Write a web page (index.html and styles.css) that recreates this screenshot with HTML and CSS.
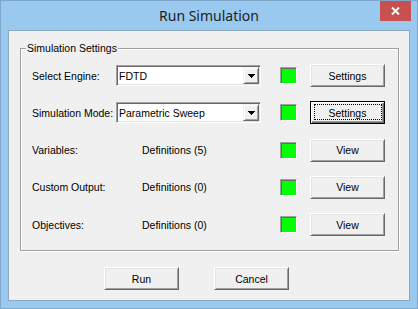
FILE: index.html
```html
<!DOCTYPE html>
<html lang="en">
<head>
    <meta charset="UTF-8">
    <title>Run Simulation</title>
    <link rel="stylesheet" href="styles.css">
</head>
<body>
    <div class="window">
        <div class="titlebar">
            <span class="title">Run Simulation</span>
            <button class="close">
                <svg width="9" height="8" viewBox="0 0 9 8"><path d="M1 0.5L8 7.5M8 0.5L1 7.5" stroke="#fff" stroke-width="2"/></svg>
            </button>
        </div>
        <div class="client">
            <div class="group">
                <span class="legend">Simulation Settings</span>
                <div class="grid">
                    <span class="label">Select Engine:</span>
                    <div class="combo">
                        <span class="combo-text">FDTD</span>
                        <span class="drop"><svg width="7" height="4" viewBox="0 0 7 4"><path d="M0 0h7v1h-1v1h-1v1h-1v1h-1v-1h-1v-1h-1v-1h-1z" fill="#000"/></svg></span>
                    </div>
                    <span class="status"></span>
                    <button class="btn">Settings</button>

                    <span class="label">Simulation Mode:</span>
                    <div class="combo">
                        <span class="combo-text">Parametric Sweep</span>
                        <span class="drop"><svg width="7" height="4" viewBox="0 0 7 4"><path d="M0 0h7v1h-1v1h-1v1h-1v1h-1v-1h-1v-1h-1v-1h-1z" fill="#000"/></svg></span>
                    </div>
                    <span class="status"></span>
                    <button class="btn focused">Settings</button>

                    <span class="label">Variables:</span>
                    <span class="value">Definitions (5)</span>
                    <span class="status"></span>
                    <button class="btn">View</button>

                    <span class="label">Custom Output:</span>
                    <span class="value">Definitions (0)</span>
                    <span class="status"></span>
                    <button class="btn">View</button>

                    <span class="label">Objectives:</span>
                    <span class="value">Definitions (0)</span>
                    <span class="status"></span>
                    <button class="btn">View</button>
                </div>
            </div>
            <div class="actions">
                <button class="btn">Run</button>
                <button class="btn">Cancel</button>
            </div>
        </div>
    </div>
</body>
</html>
```

FILE: styles.css
```css
body {
    margin: 0;
    font-family: 'Liberation Sans', Arial, sans-serif;
    font-size: 10.5px;
    color: #000;
}

.window {
    width: 418px;
    height: 309px;
    box-sizing: border-box;
    border: 1px solid #7fa7cc;
    background: #99c9ef;
    padding: 0 7px 7px 7px;
    position: relative;
}

.titlebar {
    height: 29px;
    display: flex;
    align-items: center;
    justify-content: center;
}

.title {
    font-family: 'Noto Sans', sans-serif;
    font-size: 14px;
    color: #222;
    margin-top: -1px;
}

.close {
    position: absolute;
    top: 0;
    right: 6px;
    width: 31px;
    height: 20px;
    border: none;
    padding: 0;
    background: #c75050;
    display: flex;
    align-items: center;
    justify-content: center;
}

.client {
    height: 271px;
    box-sizing: border-box;
    border: 1px solid #8da8bf;
    background: #f0f0f0;
    padding: 17px 0 0 11px;
}

.group {
    position: relative;
    width: 379px;
    height: 203px;
    box-sizing: border-box;
    border: 1px solid #a0a0a0;
    box-shadow: 1px 1px 0 #fff, inset 1px 1px 0 #fff;
    padding: 15px 0 0 11px;
}

.legend {
    position: absolute;
    top: -7px;
    left: 5px;
    padding: 0 1px;
    background: #f0f0f0;
    line-height: 13px;
}

.grid {
    display: grid;
    grid-template-columns: 84px 164px 30px 75px;
    grid-auto-rows: 23px;
    row-gap: 14.25px;
    align-items: center;
}

.value {
    padding-left: 26px;
}

.combo {
    width: 145px;
    height: 21px;
    box-sizing: border-box;
    border: 1px solid;
    border-color: #a0a0a0 #fff #fff #a0a0a0;
    box-shadow: inset 1px 1px 0 #696969, inset -1px -1px 0 #e3e3e3;
    background: #fff;
    padding: 1px;
    display: flex;
    align-items: center;
    justify-content: space-between;
}

.combo-text {
    padding-left: 1px;
}

.drop {
    width: 16px;
    height: 17px;
    box-sizing: border-box;
    border: 1px solid;
    border-color: #f0f0f0 #696969 #696969 #f0f0f0;
    box-shadow: inset 1px 1px 0 #fff, inset -1px -1px 0 #a0a0a0;
    background: #f0f0f0;
    display: flex;
    align-items: center;
    justify-content: center;
}

.drop svg {
    display: block;
    shape-rendering: crispEdges;
}

.status {
    width: 17px;
    height: 17px;
    box-sizing: border-box;
    border: 1px solid;
    border-color: #a0a0a0 #fff #fff #a0a0a0;
    box-shadow: inset 1px 1px 0 #696969;
    background: #00ff00;
}

.btn {
    position: relative;
    width: 75px;
    height: 23px;
    box-sizing: border-box;
    padding: 0;
    border: 1px solid;
    border-color: #fff #696969 #696969 #fff;
    box-shadow: inset 1px 1px 0 #e3e3e3, inset -1px -1px 0 #a0a0a0;
    background: #f0f0f0;
    font-family: inherit;
    font-size: inherit;
    color: #000;
}

.btn.focused {
    border-color: #000;
    box-shadow: inset 1px 1px 0 #fff, inset -1px -1px 0 #696969, inset -2px -2px 0 #a0a0a0;
}

.btn.focused::after {
    content: '';
    position: absolute;
    top: 2px;
    left: 3px;
    right: 2px;
    bottom: 3px;
    border: 1px dotted #000;
}

.actions {
    display: flex;
    gap: 35px;
    margin: 16px 0 0 84px;
}
```
